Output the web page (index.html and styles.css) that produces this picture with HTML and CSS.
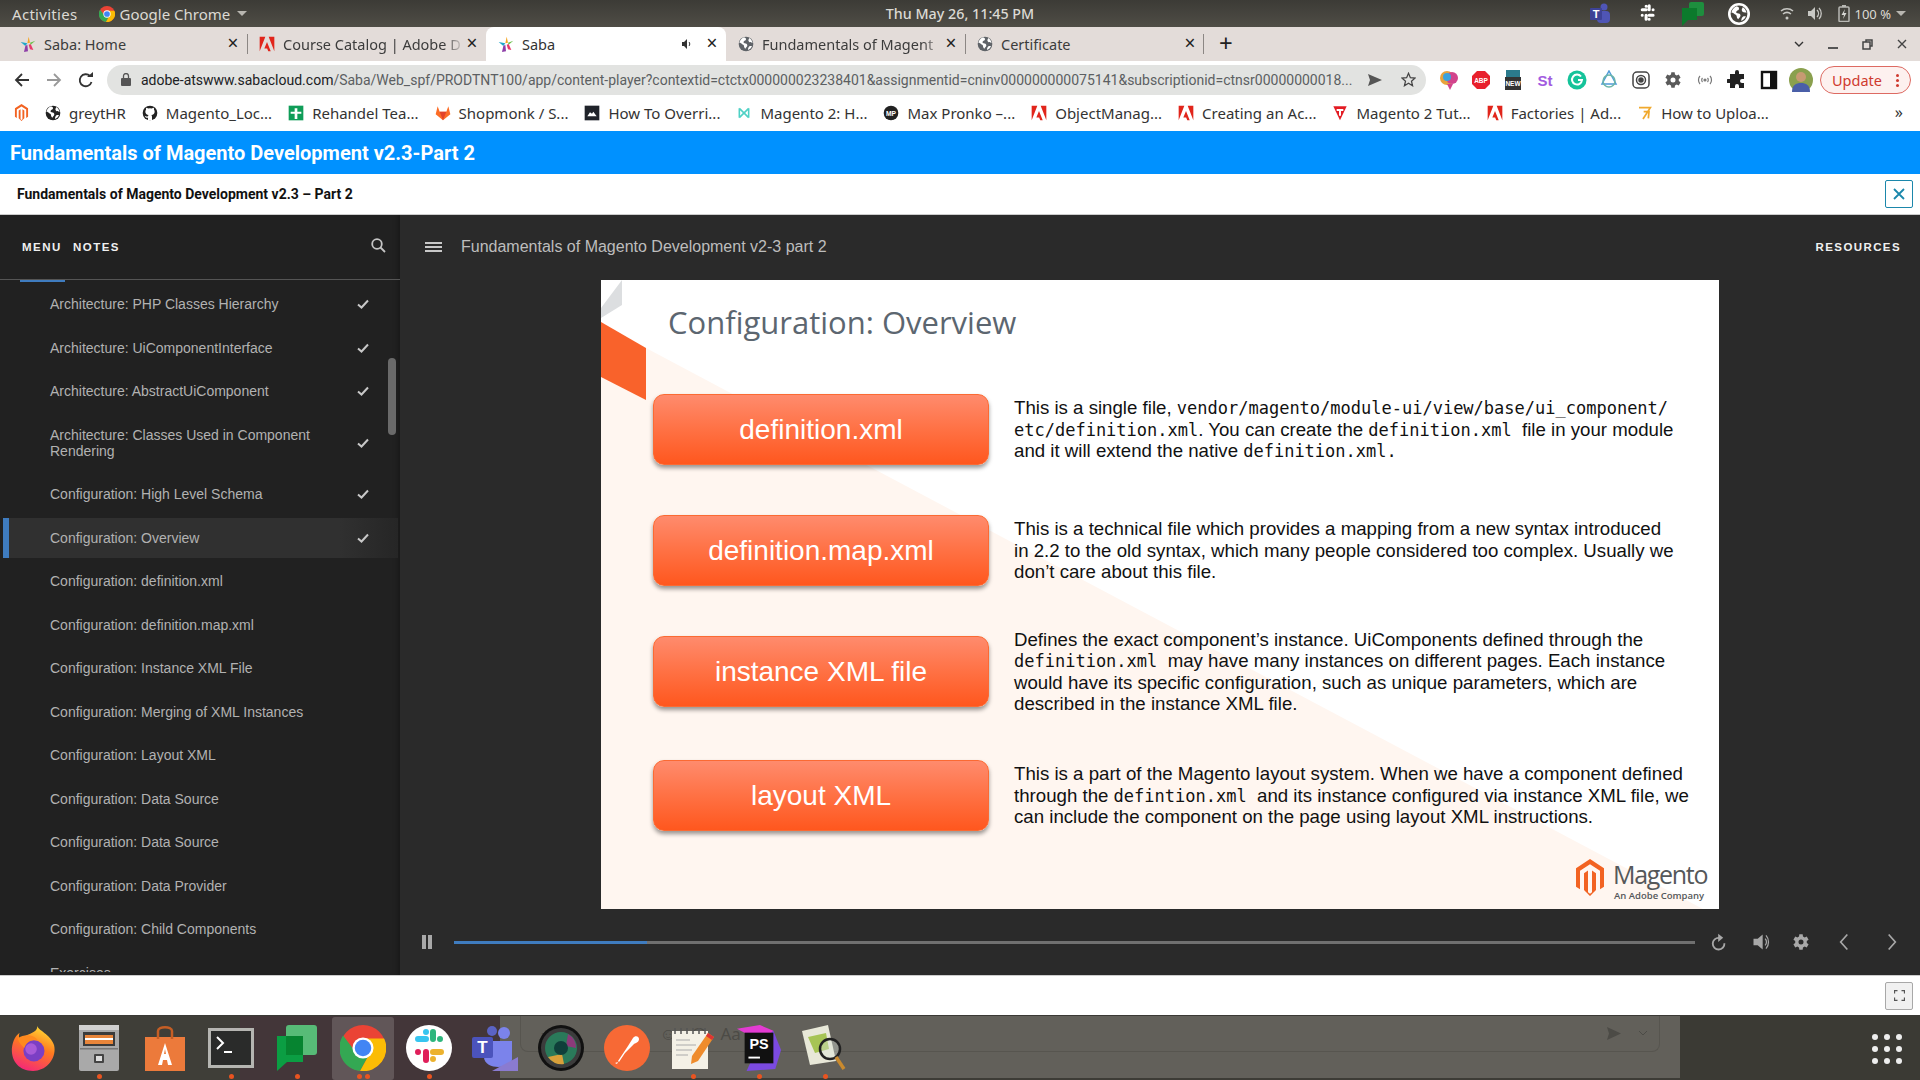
FILE: index.html
```html
<!DOCTYPE html>
<html lang="en">
<head>
    <meta charset="UTF-8">
    <meta name="viewport" content="width=device-width, initial-scale=1.0">
    <title>Saba</title>
    <link rel="stylesheet" href="styles.css">
</head>
<body>
    <svg class="defs" width="0" height="0">
        <symbol id="adobe" viewBox="0 0 24 24"><path fill="#e1251b" d="M14.5 1H23v22zM9.5 1H1v22zM12 9l5.6 14h-3.7l-1.7-4.4H8z"/></symbol>
        <symbol id="globe" viewBox="0 0 24 24"><circle cx="12" cy="12" r="11" fill="currentColor"/><path fill="#fff" d="M9 2c-3 1-6 4-7 8 2 0 3 1 4 2s3 1 3 3 1 3 2 4c1-2 3-3 3-5s-2-3-4-3-2-2-1-3 3-1 3-3-1-2-3-3zM17 3c-1 2-2 3-1 5s3 2 6 2c-1-3-3-6-5-7zM18 15c-2 1-3 3-3 6 3-1 5-3 6-6z"/></symbol>
        <symbol id="saba" viewBox="0 0 24 24"><path fill="#f5a623" d="M13 1l2 9-4 1z"/><path fill="#1fa7c9" d="M1 9l10 2-3 4z"/><path fill="#8e3fa8" d="M8 15l3-2 1 10-6 1z"/><path fill="#e8396b" d="M13 13l3-1 4 9-5-1z"/><path fill="#6cc04a" d="M15 10l8-3-7 6z"/></symbol>
        <symbol id="chrome" viewBox="0 0 24 24">
            <circle cx="12" cy="12" r="12" fill="#ea4335"/>
            <path fill="#34a853" d="M1.600 5.500A12 12 0 0 0 10.500 24L16 14H8z"/>
            <path fill="#fbbc05" d="M23 7H12l4 7-5.500 10A12 12 0 0 0 23 7z"/>
            <circle cx="12" cy="12" r="5.500" fill="#fff"/>
            <circle cx="12" cy="12" r="4.300" fill="#4285f4"/>
        </symbol>
        <symbol id="mage" viewBox="0 0 24 24"><path fill="#f26322" d="M12 0l10.500 6v12L19.500 19.700V7.700L12 3.400 4.500 7.700v12L1.500 18V6zM13.500 21.600V7.500l3 1.700v10.900L12 24l-4.500-3.900V9.200l3-1.700v14.100l1.500.900z"/></symbol>
        <symbol id="gear" viewBox="1 0 24 24"><path d="M19.900 13.200a7 7 0 0 0 0-2.400l2.200-1.500-2.200-3.800-2.500 1.100a7 7 0 0 0-2-1.200L15 2.800h-4l-.4 2.600a7 7 0 0 0-2 1.200L6.100 5.500 3.900 9.300l2.200 1.500a7 7 0 0 0 0 2.400l-2.200 1.500 2.200 3.800 2.500-1.100a7 7 0 0 0 2 1.200l.4 2.600h4l.4-2.600a7 7 0 0 0 2-1.200l2.500 1.100 2.200-3.800zM13 15a3 3 0 1 1 0-6 3 3 0 0 1 0 6z" fill-rule="evenodd"/></symbol>
    </svg>

    <!-- gnome top bar -->
    <div class="topBar">
        <div class="topLeft">
            <span class="activities">Activities</span>
            <span class="appName">
                <svg width="16" height="16" viewBox="0 0 24 24"><use href="#chrome"/></svg>
                Google Chrome <i class="caret"></i>
            </span>
        </div>
        <div class="clock">Thu May 26, 11:45 PM</div>
        <div class="topRight">
            <svg class="trTeams" width="22" height="24" viewBox="0 0 22 24"><circle cx="15" cy="5" r="3.5" fill="#4f55b5"/><rect x="8" y="9" width="13" height="12" rx="4" fill="#4f55b5"/><rect x="1" y="6" width="12" height="12" rx="1" fill="#3d4296"/><text x="7" y="15.5" class="svgT">T</text></svg>
            <svg class="trSlack" width="20" height="20" viewBox="0 0 46 46"><g stroke="#fff" stroke-width="7" stroke-linecap="round" fill="none"><path d="M21 13h-9M21 5v0M28 13V4M37 13v0M28 26h9M28 35v0M21 26v9M12 26v0"/></g></svg>
            <svg class="trChat" width="22" height="24" viewBox="0 0 22 24"><rect x="7" y="0" width="15" height="14" rx="2" fill="#1e8e3e"/><path fill="#0c7a2c" d="M0 6h15v12H6l-6 6z"/></svg>
            <svg class="trGlobe" width="22" height="22" viewBox="0 0 24 24" style="color:#46443e"><circle cx="12" cy="12" r="12" fill="#fff"/><use href="#globe" width="20" height="20" x="2" y="2"/></svg>
            <svg class="trWifi" width="14" height="15" viewBox="0 0 14 15" fill="none" stroke="#c8c8c4" stroke-width="1.600"><path d="M1 5c3.500-3 8.500-3 12 0M3 8c2.500-2 5.500-2 8 0"/><circle cx="7" cy="12" r="1.500" fill="#c8c8c4" stroke="none"/></svg>
            <svg class="trVol" width="15" height="15" viewBox="0 0 15 15" fill="#c8c8c4"><path d="M0 5h3l4-4v13l-4-4H0z"/><path fill="none" stroke="#c8c8c4" stroke-width="1.300" d="M9 4c2 2 2 5 0 7M11 2c3 3 3 8 0 11"/></svg>
            <svg class="trBatt" width="12" height="17" viewBox="0 0 12 17"><rect x="1" y="2" width="10" height="14.500" rx="1" fill="none" stroke="#b8b8b4" stroke-width="1.500"/><rect x="4" y="0" width="4" height="2" fill="#b8b8b4"/><path fill="#d8d8d4" d="M7 4L3.500 10H6l-1 4 3.500-6H6z"/></svg>
            <span class="trPct">100 %</span>
            <i class="caret"></i>
        </div>
    </div>

    <!-- chrome tabs -->
    <div class="tabStrip">
        <div class="tab">
            <svg class="fav" viewBox="0 0 24 24"><use href="#saba"/></svg>
            <span class="tabTitle">Saba: Home</span>
            <span class="tabX">×</span>
        </div>
        <div class="tab sep">
            <svg class="fav" viewBox="0 0 24 24"><use href="#adobe"/></svg>
            <span class="tabTitle fade">Course Catalog | Adobe D</span>
            <span class="tabX">×</span>
        </div>
        <div class="tab active">
            <svg class="fav" viewBox="0 0 24 24"><use href="#saba"/></svg>
            <span class="tabTitle">Saba</span>
            <svg class="tabSound" width="10" height="10" viewBox="0 0 10 10"><path fill="#333" d="M0 3h2l3-3v10L2 7H0z"/><path fill="none" stroke="#333" d="M7 3c1 1 1 3 0 4"/></svg>
            <span class="tabX">×</span>
        </div>
        <div class="tab">
            <svg class="fav grey" viewBox="0 0 24 24"><use href="#globe"/></svg>
            <span class="tabTitle fade">Fundamentals of Magent</span>
            <span class="tabX">×</span>
        </div>
        <div class="tab sep endSep">
            <svg class="fav grey" viewBox="0 0 24 24"><use href="#globe"/></svg>
            <span class="tabTitle">Certificate</span>
            <span class="tabX">×</span>
        </div>
        <div class="newTab">+</div>
        <div class="winBtns">
            <svg width="10" height="6" viewBox="0 0 10 6" fill="none" stroke="#333" stroke-width="1.400"><path d="M1 1l4 4 4-4"/></svg>
            <svg width="10" height="10" viewBox="0 0 10 10"><rect y="8" width="10" height="2" fill="#555"/></svg>
            <svg width="11" height="11" viewBox="0 0 11 11" fill="none" stroke="#444" stroke-width="1.500"><rect x="1" y="3" width="7" height="7"/><path d="M4 3V1h6v6H8"/></svg>
            <svg width="10" height="10" viewBox="0 0 10 10" stroke="#444" stroke-width="1.400"><path d="M1 1l8 8M9 1l-8 8"/></svg>
        </div>
    </div>

    <!-- address bar -->
    <div class="toolbar">
        <svg class="navBtn" width="16" height="16" viewBox="0 0 16 16" fill="none" stroke="#333" stroke-width="1.800"><path d="M15 8H2M8 2L2 8l6 6"/></svg>
        <svg class="navBtn" width="16" height="16" viewBox="0 0 16 16" fill="none" stroke="#999" stroke-width="1.800"><path d="M1 8h13M8 2l6 6-6 6"/></svg>
        <svg class="navBtn" width="16" height="16" viewBox="0 0 16 16" fill="none" stroke="#333" stroke-width="1.800"><path d="M13.500 10A6 6 0 1 1 12 4"/><path fill="#333" stroke="none" d="M9 5h6V0z"/></svg>
        <div class="omnibox">
            <svg class="lock" width="10" height="13" viewBox="0 0 10 13"><rect y="5" width="10" height="8" rx="1" fill="#555"/><path d="M2.500 5V3a2.500 2.500 0 0 1 5 0v2" fill="none" stroke="#555" stroke-width="1.300"/></svg>
            <span class="url"><b>adobe-atswww.sabacloud.com</b>/Saba/Web_spf/PRODTNT100/app/content-player?contextid=ctctx000000023238401&amp;assignmentid=cninv000000000075141&amp;subscriptionid=ctnsr00000000018...</span>
            <svg class="share" width="14" height="12" viewBox="0 0 14 12"><path fill="#555" d="M0 0l14 6-14 6 2-6z"/></svg>
            <svg class="star" width="15" height="15" viewBox="0 0 24 24" fill="none" stroke="#444" stroke-width="2"><path d="M12 2l3 7 7.500.700-5.700 5 1.700 7.300L12 18l-6.500 4 1.700-7.300-5.700-5L9 9z"/></svg>
        </div>
        <div class="extensions">
            <svg class="ext" viewBox="0 0 20 20"><circle cx="8" cy="8" r="7" fill="#e8a33c"/><circle cx="13" cy="8" r="6" fill="#d2448c"/><circle cx="8" cy="7" r="4" fill="#3aa2dd"/><path d="M8 14h6l-3 6z" fill="#d2448c"/></svg>
            <svg class="ext" viewBox="0 0 20 20"><path fill="#e8202c" d="M6 1h8l5 5v8l-5 5H6l-5-5V6z"/><text x="10" y="13" class="svgT small">ABP</text></svg>
            <svg class="ext" viewBox="0 0 20 20"><rect x="3" width="14" height="7" fill="#2b7a8c"/><rect x="2" y="7" width="16" height="13" fill="#333"/><text x="10" y="16" class="svgT small">NEW</text></svg>
            <svg class="ext" viewBox="0 0 20 20"><text x="10" y="16" class="svgT st">St</text></svg>
            <svg class="ext" viewBox="0 0 20 20"><circle cx="10" cy="10" r="9.500" fill="#15c39a"/><path d="M14 6.500A5 5 0 1 0 15 10h-4" fill="none" stroke="#fff" stroke-width="2"/></svg>
            <svg class="ext" viewBox="0 0 20 20" fill="none" stroke="#4f9bd9" stroke-width="1.500"><path d="M10 1l7 13H3z"/><circle cx="10" cy="11" r="6" stroke="#6cb6a8"/></svg>
            <svg class="ext" viewBox="0 0 20 20" fill="none" stroke="#444" stroke-width="1.500"><rect x="2" y="2" width="16" height="16" rx="4"/><circle cx="10" cy="10" r="4.500"/><circle cx="10" cy="10" r="2" fill="#444"/></svg>
            <svg class="ext" viewBox="0 0 24 24"><use href="#gear" fill="#5a5a5a"/></svg>
            <svg class="ext" viewBox="0 0 20 20" fill="none" stroke="#777" stroke-width="1.200"><path d="M5 6c-2 2-2 6 0 8M15 6c2 2 2 6 0 8M7.500 8c-1 1-1 3 0 4M12.500 8c1 1 1 3 0 4"/><circle cx="10" cy="10" r="1" fill="#777"/></svg>
            <svg class="ext" viewBox="0 0 20 20"><path fill="#222" d="M8 2a2 2 0 0 1 4 0v2h5v5h-2a2 2 0 0 0 0 4h2v5h-5v-2a2 2 0 0 0-4 0v2H3v-5H1a2 2 0 0 1 0-4h2V4h5z"/></svg>
            <svg class="ext" viewBox="0 0 20 20"><rect x="3" y="2" width="14" height="16" fill="none" stroke="#111" stroke-width="2.400"/><rect x="11" y="2" width="6" height="16" fill="#111"/></svg>
            <svg class="avatar" viewBox="0 0 24 24"><circle cx="12" cy="12" r="12" fill="#8aa04e"/><circle cx="12" cy="9" r="5" fill="#c79a72"/><path d="M3 24c0-7 4-9 9-9s9 2 9 9z" fill="#4a5fa8"/></svg>
        </div>
        <div class="updateBtn"><span>Update</span><i class="updDots"></i></div>
    </div>

    <!-- bookmarks -->
    <div class="bookmarks">
        <svg class="bmFirst" viewBox="0 0 24 24" preserveAspectRatio="none"><use href="#mage"/></svg>
        <div class="bm"><svg class="fav dark" viewBox="0 0 24 24"><use href="#globe"/></svg>greytHR</div>
        <div class="bm"><svg class="fav" viewBox="0 0 24 24"><circle cx="12" cy="12" r="11" fill="#222"/><path fill="#fff" d="M9 23v-4c-3 .500-4-1-5-3 2 0 2 2 5 1 0-1 .300-1.500 1-2-3-.500-5-2-5-5 0-1.500.500-2.500 1-3-.200-1 0-2 .300-3 1 0 2 .500 3 1.300a9 9 0 0 1 5.400 0C15.700 4.500 16.700 4 17.700 4c.300 1 .500 2 .300 3 .500.500 1 1.500 1 3 0 3-2 4.500-5 5 .700.500 1 1.300 1 2.500V23z"/></svg>Magento_Loc...</div>
        <div class="bm"><svg class="fav" viewBox="0 0 24 24"><rect x="1" y="1" width="22" height="22" fill="#0f9d58"/><path fill="#fff" d="M10 5h4v5h6v3h-6v8h-4v-8H4v-3h6z"/></svg>Rehandel Tea...</div>
        <div class="bm"><svg class="fav" viewBox="0 0 24 24"><path fill="#fc6d26" d="M12 23L1 14 4 2l3 8h10l3-8 3 12z"/><path fill="#e24329" d="M12 23L7 10h10z"/></svg>Shopmonk / S...</div>
        <div class="bm"><svg class="fav" viewBox="0 0 24 24"><rect x="1" y="1" width="22" height="22" fill="#20232a"/><path fill="#fff" d="M5 17l4-6 3 2 2-3 5 7z"/></svg>How To Overri...</div>
        <div class="bm"><svg class="fav" viewBox="0 0 24 24" fill="none" stroke="#4fd1c5" stroke-width="2.400"><path d="M5 5v14M19 5v14M5 5l14 14M19 5L5 19"/></svg>Magento 2: H...</div>
        <div class="bm"><svg class="fav" viewBox="0 0 24 24"><circle cx="12" cy="12" r="11" fill="#222"/><text x="12" y="16" class="svgT mp">MP</text></svg>Max Pronko –...</div>
        <div class="bm"><svg class="fav" viewBox="0 0 24 24"><use href="#adobe"/></svg>ObjectManag...</div>
        <div class="bm"><svg class="fav" viewBox="0 0 24 24"><use href="#adobe"/></svg>Creating an Ac...</div>
        <div class="bm"><svg class="fav" viewBox="0 0 24 24"><path fill="#e31b23" d="M2 2h20l-10 21z"/><path fill="#fff" d="M7 6h10v3h-3.500v7h-3V9H7z"/></svg>Magento 2 Tut...</div>
        <div class="bm"><svg class="fav" viewBox="0 0 24 24"><use href="#adobe"/></svg>Factories | Ad...</div>
        <div class="bm"><svg class="fav" viewBox="0 0 24 24" fill="none" stroke="#f0a92e" stroke-width="2.600"><path d="M3 4h17L9 21M10 10h8l-1 10"/></svg>How to Uploa...</div>
        <div class="bmMore">»</div>
    </div>

    <!-- saba player -->
    <div class="courseBar">Fundamentals of Magento Development v2.3-Part 2</div>
    <div class="courseHead">
        <span>Fundamentals of Magento Development v2.3 – Part 2</span>
        <div class="closeBtn">
            <svg width="12" height="12" viewBox="0 0 12 12" stroke="#1b87ab" stroke-width="1.800"><path d="M1 1l10 10M11 1L1 11"/></svg>
        </div>
    </div>

    <div class="player">
        <div class="sidebar">
            <div class="sideHead">
                <span class="sideTab on">MENU</span>
                <span class="sideTab">NOTES</span>
                <svg class="sideSearch" width="15" height="15" viewBox="0 0 15 15" fill="none" stroke="#c4c4c4" stroke-width="1.800"><circle cx="6" cy="6" r="4.800"/><path d="M9.500 9.500l4.500 4.500"/></svg>
            </div>
            <div class="sideList">
                <div class="item"><span>Architecture: PHP Classes Hierarchy</span><svg class="tick" viewBox="0 0 12 10"><path d="M1 5.500l3.500 3L11 1.500"/></svg></div>
                <div class="item"><span>Architecture: UiComponentInterface</span><svg class="tick" viewBox="0 0 12 10"><path d="M1 5.500l3.500 3L11 1.500"/></svg></div>
                <div class="item"><span>Architecture: AbstractUiComponent</span><svg class="tick" viewBox="0 0 12 10"><path d="M1 5.500l3.500 3L11 1.500"/></svg></div>
                <div class="item tall"><span>Architecture: Classes Used in Component Rendering</span><svg class="tick" viewBox="0 0 12 10"><path d="M1 5.500l3.500 3L11 1.500"/></svg></div>
                <div class="item"><span>Configuration: High Level Schema</span><svg class="tick" viewBox="0 0 12 10"><path d="M1 5.500l3.500 3L11 1.500"/></svg></div>
                <div class="item current"><span>Configuration: Overview</span><svg class="tick" viewBox="0 0 12 10"><path d="M1 5.500l3.500 3L11 1.500"/></svg></div>
                <div class="item"><span>Configuration: definition.xml</span></div>
                <div class="item"><span>Configuration: definition.map.xml</span></div>
                <div class="item"><span>Configuration: Instance XML File</span></div>
                <div class="item"><span>Configuration: Merging of XML Instances</span></div>
                <div class="item"><span>Configuration: Layout XML</span></div>
                <div class="item"><span>Configuration: Data Source</span></div>
                <div class="item"><span>Configuration: Data Source</span></div>
                <div class="item"><span>Configuration: Data Provider</span></div>
                <div class="item"><span>Configuration: Child Components</span></div>
                <div class="item"><span>Exercises</span></div>
            </div>
            <div class="scrollThumb"></div>
        </div>

        <div class="stage">
            <div class="stageHead">
                <svg width="17" height="10" viewBox="0 0 17 10" fill="#c8c8c8"><rect width="17" height="2"/><rect y="4" width="17" height="2"/><rect y="8" width="17" height="2"/></svg>
                <span class="stageTitle">Fundamentals of Magento Development v2-3 part 2</span>
                <span class="resources">RESOURCES</span>
            </div>

            <div class="slide">
                <svg class="slideBg" viewBox="0 0 1118 629">
                    <path fill="#fff6f0" d="M0 85L45 68l1057 561H0z"/>
                    <path fill="#dcdee0" d="M0 28L21 0v25L0 38z"/>
                    <path fill="#f9622b" d="M0 42l45 26v52L0 97z"/>
                </svg>
                <h1 class="slideTitle">Configuration: Overview</h1>
                <div class="slideRow">
                    <div class="pill">definition.xml</div>
                    <p>This is a single file, <code>vendor/magento/module-ui/view/base/ui_component/</code><br><code>etc/definition.xml</code>. You can create the <code>definition.xml</code>&nbsp; file in your module<br>and it will extend the native <code>definition.xml.</code></p>
                </div>
                <div class="slideRow">
                    <div class="pill">definition.map.xml</div>
                    <p>This is a technical file which provides a mapping from a new syntax introduced<br>in 2.2 to the old syntax, which many people considered too complex. Usually we<br>don’t care about this file.</p>
                </div>
                <div class="slideRow">
                    <div class="pill">instance XML file</div>
                    <p>Defines the exact component’s instance. UiComponents defined through the<br><code>definition.xml</code>&nbsp; may have many instances on different pages. Each instance<br>would have its specific configuration, such as unique parameters, which are<br>described in the instance XML file.</p>
                </div>
                <div class="slideRow lastRow">
                    <div class="pill">layout XML</div>
                    <p>This is a part of the Magento layout system. When we have a component defined<br>through the <code>defintion.xml</code>&nbsp; and its instance configured via instance XML file, we<br>can include the component on the page using layout XML instructions.</p>
                </div>
                <div class="mageLogo">
                    <svg width="32" height="37" viewBox="0 0 24 24" preserveAspectRatio="none"><use href="#mage"/></svg>
                    <div class="mageText">
                        <span class="mageName">Magento</span>
                        <span class="mageSub">An Adobe Company</span>
                    </div>
                </div>
            </div>

            <div class="controls">
                <svg width="10" height="14" viewBox="0 0 10 14" fill="#a8a8a8"><rect width="4" height="14"/><rect x="6" width="4" height="14"/></svg>
                <div class="track"><div class="trackDone" style="width:193px"></div></div>
                <svg class="ctl replay" viewBox="0 0 24 24" fill="none" stroke="#a8a8a8" stroke-width="2.200"><path d="M18.500 13.500A7 7 0 1 1 12 7"/><path fill="#a8a8a8" stroke="none" d="M11 2l6 5-6 5z"/></svg>
                <svg class="ctl" viewBox="0 0 24 24" fill="#a8a8a8"><path d="M3 8h5l6-5v18l-6-5H3z"/><path fill="none" stroke="#a8a8a8" stroke-width="1.500" d="M17 8c2 2.500 2 5.500 0 8M18 4c4 4.500 4 11.500 0 16"/></svg>
                <svg class="ctl gearCtl" viewBox="0 0 24 24" fill="#a8a8a8"><use href="#gear"/></svg>
                <svg class="ctl arrowCtl" viewBox="0 0 24 24" fill="none" stroke="#a8a8a8" stroke-width="2"><path d="M16 3l-8 9 8 9"/></svg>
                <svg class="ctl arrowCtl nextCtl" viewBox="0 0 24 24" fill="none" stroke="#a8a8a8" stroke-width="2"><path d="M8 3l8 9-8 9"/></svg>
            </div>
        </div>
    </div>

    <div class="pageFoot">
        <div class="fullBtn">
            <svg width="11" height="11" viewBox="0 0 11 11" fill="none" stroke="#555" stroke-width="1.300"><path d="M0.500 3.500v-3h3M7.500.500h3v3M10.500 7.500v3h-3M3.500 10.500h-3v-3"/></svg>
        </div>
    </div>

    <!-- ubuntu dock, the teams window shows through behind it -->
    <div class="dock">
        <div class="dockBack">
            <div class="zoneA"></div>
            <div class="zoneB"></div>
            <div class="zoneC">
                <div class="ghostBox">
                    <span>+</span><span class="gapA">☺</span><span>@</span><span>Aa</span>
                    <svg class="ghostSend" width="14" height="13" viewBox="0 0 14 13"><path fill="#4c4b46" d="M0 0l14 6.500L0 13l2-6.500z"/></svg>
                    <svg class="ghostDown" width="8" height="5" viewBox="0 0 8 5" fill="none" stroke="#4c4b46"><path d="M0 0l4 4 4-4"/></svg>
                </div>
            </div>
            <div class="zoneD"></div>
        </div>
        <div class="dockApp"><svg viewBox="0 0 46 48"><defs><linearGradient id="ffBody" x1="0.700" y1="0" x2="0.300" y2="1"><stop offset="0" stop-color="#ffe135"/><stop offset=".45" stop-color="#ff7a1f"/><stop offset="1" stop-color="#f5267a"/></linearGradient></defs><path fill="url(#ffBody)" d="M27 0c1 6 14 9 18 21 3 13-7 27-22 27S0 37 1 24C2 16 5 11 9 8c-1 3-1 6 1 8 3-5 9-6 14-9 3-2 4-4 3-7z"/><circle cx="24" cy="27" r="11" fill="#7b3fc4"/><circle cx="21" cy="25" r="6" fill="#a85ad8"/><path fill="#ff8a1f" d="M7 14c7-5 17-4 21 2-5-2-12 1-14 8-3-3-6-6-7-10z"/></svg></div>
        <div class="dockApp run"><svg viewBox="0 0 44 46"><rect x="2" y="0" width="40" height="46" rx="2" fill="#a9a9a9"/><rect x="2" y="0" width="40" height="5" fill="#d0d0d0"/><rect x="6" y="7" width="32" height="14" fill="#3b3b3b"/><rect x="8" y="10" width="28" height="9" fill="#e8853a"/><rect x="8" y="13" width="28" height="2" fill="#fff"/><rect x="3" y="23" width="38" height="1.500" fill="#777"/><rect x="17" y="29" width="10" height="9" rx="1" fill="#444"/><rect x="19" y="31" width="6" height="5" fill="#ddd"/></svg></div>
        <div class="dockApp"><svg viewBox="0 0 44 46"><path fill="#ec7a3b" d="M2 12h40v34H2z"/><path fill="none" stroke="#c55e25" stroke-width="2.500" d="M15 14V6c0-5 14-5 14 0v8"/><path fill="#fff" d="M22 18l7 22h-4l-1-5h-4l-1 5h-4zM21 29h2l-1-5z"/></svg></div>
        <div class="dockApp run"><svg viewBox="0 0 46 46"><rect y="3" width="46" height="40" fill="#b5b5b1"/><rect x="3" y="6" width="40" height="34" fill="#2a2b2a"/><path fill="none" stroke="#fff" stroke-width="2" d="M9 12l6 6-6 6"/><rect x="16" y="26" width="8" height="2" fill="#fff"/></svg></div>
        <div class="dockApp run"><svg viewBox="0 0 40 46"><rect x="9" y="0" width="31" height="30" rx="3" fill="#57bb77"/><path fill="#0b9e43" d="M0 11h26v26H10l-10 9z"/><rect x="9" y="11" width="17" height="19" fill="#068430"/></svg></div>
        <div class="dockApp current run two"><svg viewBox="0 0 24 24" preserveAspectRatio="none"><use href="#chrome"/></svg></div>
        <div class="dockApp run"><svg viewBox="0 0 46 46"><circle cx="23" cy="23" r="23" fill="#fff"/><g stroke-width="6" stroke-linecap="round" fill="none"><path stroke="#36c5f0" d="M20 14h-8M20 7v0"/><path stroke="#2eb67d" d="M27 14V7M34 14v0"/><path stroke="#ecb22e" d="M27 27h8M27 34v0"/><path stroke="#e01e5a" d="M20 27v8M12 27v0"/></g></svg></div>
        <div class="dockApp"><svg viewBox="0 0 46 46"><circle cx="32" cy="8" r="6" fill="#7b83eb"/><circle cx="20" cy="6" r="5" fill="#5b63c4"/><path fill="#7b83eb" d="M12 16h28v18c0 6-8 8-14 8s-14-3-14-10z"/><rect x="0" y="12" width="21" height="21" rx="2" fill="#4b53bc"/><text x="10.500" y="28" class="svgT teamsT">T</text><path fill="#8a7bd0" d="M46 32v14H20z"/></svg></div>
        <div class="dockApp"><svg viewBox="0 0 46 46"><circle cx="23" cy="23" r="23" fill="#111"/><circle cx="23" cy="23" r="20" fill="#3c3c3c"/><circle cx="23" cy="23" r="16" fill="#2a7a5a"/><path fill="#d9a03a" d="M10 32a16 16 0 0 0 16 7l-2-10z"/><path fill="#8c3a7a" d="M30 9a16 16 0 0 1 8 14l-10-2z"/><circle cx="23" cy="23" r="7" fill="#0f3f3a"/></svg></div>
        <div class="dockApp"><svg viewBox="0 0 46 46"><circle cx="23" cy="23" r="23" fill="#f76935"/><path fill="#fff" d="M14 36l10-15 5-8c2-3 6-2 6 1 0 3-3 4-5 5l-9 9-6 9zM11 38l3-1-1 2z"/></svg></div>
        <div class="dockApp run"><svg viewBox="0 0 46 46"><rect x="2" y="6" width="36" height="38" fill="#f4f1e6"/><path stroke="#555" stroke-width="1.500" d="M5 3v6M11 3v6M17 3v6M23 3v6M29 3v6M35 3v6"/><path stroke="#aaa" d="M6 15h14M6 20h20M6 25h16M6 30h12"/><path fill="#ef8c2c" d="M38 8l6 4-16 24-7 3 1-8z"/><path fill="#d33" d="M38 8l6 4-2 3-6-4z"/></svg></div>
        <div class="dockApp run"><svg viewBox="0 0 46 48"><path fill="#e33bd2" d="M0 4l24-4 14 6-8 14z"/><path fill="#7b4ae0" d="M38 6l8 20-6 20-30 2 14-30z"/><rect x="8" y="8" width="30" height="32" fill="#111"/><text x="23" y="25" class="svgT psT">PS</text><rect x="12" y="33" width="12" height="2" fill="#fff"/></svg></div>
        <div class="dockApp run"><svg viewBox="0 0 46 46"><path fill="#e8e8d8" d="M0 6l26-6 8 36-26 4z"/><path fill="#a6c454" d="M6 12l18-4 3 16-14 4z"/><circle cx="28" cy="24" r="10" fill="rgba(220,230,220,.4)" stroke="#222" stroke-width="2.500"/><path stroke="#c98a2e" stroke-width="3.500" d="M34 32l8 12"/></svg></div>
        <div class="appGrid"><i></i><i></i><i></i><i></i><i></i><i></i><i></i><i></i><i></i></div>
    </div>
</body>
</html>
```

FILE: styles.css
```css
* {
    box-sizing: border-box;
}
html, body {
    margin: 0;
    height: 100%;
}
body {
    width: 1920px;
    height: 1080px;
    overflow: hidden;
    display: flex;
    flex-direction: column;
    font-family: "Noto Sans", sans-serif;
    background: #fff;
}
.defs {
    position: absolute;
}
.svgT {
    font-family: "Liberation Sans", sans-serif;
    font-weight: 700;
    font-size: 11px;
    fill: #fff;
    text-anchor: middle;
}
.svgT.small {
    font-size: 6.5px;
}
.svgT.st {
    font-size: 15px;
    fill: #a25be0;
}
.svgT.mp {
    font-size: 10px;
}
.svgT.teamsT {
    font-size: 17px;
}
.svgT.psT {
    font-size: 15px;
}

/* top bar */
.topBar {
    height: 27px;
    flex: none;
    display: grid;
    grid-template-columns: 1fr auto 1fr;
    align-items: center;
    font-size: 15px;
    color: #dcdad4;
    background: linear-gradient(#3c3b36, #4f4d46);
}
.topLeft {
    display: flex;
    align-items: center;
    gap: 21px;
    padding-left: 12px;
}
.activities {
    letter-spacing: .3px;
}
.appName {
    display: flex;
    align-items: center;
    gap: 5px;
}
.caret {
    display: inline-block;
    width: 0;
    height: 0;
    border-left: 5px solid transparent;
    border-right: 5px solid transparent;
    border-top: 5px solid #b8b6b0;
    margin-left: 2px;
}
.clock {
    font-size: 14.300px;
    font-weight: 500;
}
.topRight {
    height: 27px;
    display: flex;
    align-items: center;
    justify-content: flex-end;
    padding-right: 14px;
    font-size: 13px;
}
.trTeams { margin-right: 26px; }
.trSlack { margin-right: 25px; }
.trChat { margin-right: 24px; }
.trGlobe { margin-right: 30px; }
.trWifi { margin-right: 14px; }
.trVol { margin-right: 15px; }
.trBatt { margin-right: 5px; }
.trPct { margin-right: 3px; }

/* tabs */
.tabStrip {
    height: 34px;
    flex: none;
    display: flex;
    padding-left: 8px;
    background: #e3dcd9;
    color: #3c3c3c;
    font-size: 14.500px;
}
.tab {
    position: relative;
    width: 239px;
    height: 34px;
    display: flex;
    align-items: center;
    padding: 0 8px 1px 12px;
}
.tab.sep::before, .tab.endSep::after {
    content: "";
    position: absolute;
    left: 0;
    top: 7px;
    height: 20px;
    width: 1px;
    background: #8c8784;
}
.tab.endSep::after {
    left: auto;
    right: 0;
}
.tab.active {
    background: #fff;
    border-radius: 8px 8px 0 0;
    color: #333;
    width: 240px;
}
.fav {
    width: 16px;
    height: 16px;
    flex: none;
}
.fav.grey {
    color: #5f6368;
}
.fav.dark {
    color: #222;
}
.tabTitle {
    flex: 1;
    margin-left: 8px;
    white-space: nowrap;
}
.tabTitle.fade {
    -webkit-mask-image: linear-gradient(to right, #000 88%, transparent 99%);
    mask-image: linear-gradient(to right, #000 88%, transparent 99%);
}
.tabSound {
    margin-right: 14px;
}
.tabX {
    font-size: 19px;
    line-height: 1;
    color: #222;
    width: 12px;
    text-align: center;
}
.newTab {
    font-size: 24px;
    line-height: 32px;
    color: #222;
    margin-left: 15px;
}
.winBtns {
    margin-left: auto;
    display: flex;
    align-items: center;
    gap: 24px;
    padding-right: 13px;
}

/* toolbar */
.toolbar {
    height: 37px;
    flex: none;
    display: flex;
    align-items: center;
    padding-left: 14px;
    background: #fff;
}
.navBtn {
    margin-right: 16px;
}
.omnibox {
    width: 1319px;
    height: 30px;
    margin-left: -3px;
    display: flex;
    align-items: center;
    padding-left: 14px;
    background: #e2e3e1;
    border-radius: 15px;
}
.url {
    margin-left: 10px;
    width: 1214px;
    flex: none;
    font: 14px Roboto, sans-serif;
    white-space: nowrap;
    color: #5c5f62;
}
.url b {
    font-weight: 400;
    color: #202124;
}
.share {
    margin-left: 13px;
}
.star {
    margin-left: 19px;
}
.extensions {
    display: flex;
    align-items: center;
    gap: 12px;
    margin-left: 13px;
}
.ext {
    width: 20px;
    height: 20px;
    flex: none;
}
.avatar {
    width: 24px;
    height: 24px;
    margin-left: -2px;
}
.updateBtn {
    width: 91px;
    height: 28px;
    margin-left: 7px;
    display: flex;
    align-items: center;
    padding-left: 11px;
    border: 1px solid #dd6a62;
    border-radius: 14px;
    background: #fdf1ef;
    color: #cf3a2e;
    font-size: 14.500px;
    position: relative;
}
.updDots {
    position: absolute;
    right: 11px;
    top: 7px;
    width: 3px;
    height: 3px;
    border-radius: 50%;
    background: #cf3a2e;
    box-shadow: 0 5px 0 #cf3a2e, 0 10px 0 #cf3a2e;
}

/* bookmarks */
.bookmarks {
    position: relative;
    height: 33px;
    flex: none;
    display: flex;
    align-items: center;
    padding: 0 0 4px 14px;
    gap: 16px;
    font-size: 15px;
    color: #333;
    background: #fff;
    white-space: nowrap;
}
.bmFirst {
    width: 15px;
    height: 17px;
    flex: none;
}
.bm {
    display: flex;
    align-items: center;
    gap: 8px;
}
.bmMore {
    position: absolute;
    right: 17px;
    top: 3px;
    font-size: 16px;
}

/* course header */
.courseBar {
    height: 43px;
    flex: none;
    display: flex;
    align-items: center;
    padding-left: 10px;
    background: #0091ff;
    color: #fff;
    font: 700 20px Roboto, sans-serif;
}
.courseHead {
    height: 41px;
    flex: none;
    display: flex;
    align-items: center;
    justify-content: space-between;
    padding: 0 7px 0 17px;
    background: #fff;
    border-bottom: 1px solid #ccc;
    font: 700 14px Roboto, sans-serif;
    color: #111;
}
.closeBtn {
    width: 28px;
    height: 28px;
    display: flex;
    align-items: center;
    justify-content: center;
    border: 1px solid #1b87ab;
    border-radius: 2px;
}

/* player */
.player {
    height: 760px;
    flex: none;
    display: flex;
    background: #2a2a2a;
}
.sidebar {
    position: relative;
    width: 400px;
    background: #212121;
    box-shadow: inset -6px 0 6px -5px rgba(0, 0, 0, .35);
}
.sideHead {
    position: relative;
    height: 65px;
    display: flex;
    align-items: center;
    gap: 11px;
    padding-left: 22px;
    border-bottom: 1px solid #555;
}
.sideTab {
    position: relative;
    font: 700 11.500px "Liberation Sans", sans-serif;
    letter-spacing: 1.500px;
    color: #f0f0f0;
}
.sideTab.on::after {
    content: "";
    position: absolute;
    left: -2px;
    right: -3px;
    top: 39px;
    height: 2px;
    background: #3f7cbf;
}
.sideSearch {
    position: absolute;
    left: 371px;
    top: 23px;
}
.sideList {
    height: 692px;
    padding-top: 4px;
    overflow: hidden;
}
.item {
    height: 40px;
    margin: 0 2px 3.500px 0;
    display: flex;
    align-items: center;
    padding: 0 28px 0 50px;
    font: 14px/16px "Liberation Sans", sans-serif;
    color: #b2b2b2;
}
.item span {
    flex: 1;
}
.item.tall {
    height: 56px;
}
.item.current {
    margin-left: 3px;
    padding-left: 41px;
    border-left: 6px solid #3f7cbf;
    background: linear-gradient(to right, #303030 85%, #262626);
}
.tick {
    width: 12px;
    height: 10px;
    flex: none;
    margin-right: 1px;
    fill: none;
    stroke: #c8c8c8;
    stroke-width: 2;
}
.scrollThumb {
    position: absolute;
    left: 388px;
    top: 143px;
    width: 8px;
    height: 77px;
    border-radius: 4px;
    background: #6a6a6a;
}
.stage {
    flex: 1;
    display: flex;
    flex-direction: column;
}
.stageHead {
    height: 65px;
    flex: none;
    display: flex;
    align-items: center;
    padding: 0 19px 2px 25px;
}
.stageTitle {
    margin-left: 19px;
    font: 16px "Liberation Sans", sans-serif;
    color: #bdbdbd;
}
.resources {
    margin-left: auto;
    font: 700 11.500px "Liberation Sans", sans-serif;
    letter-spacing: 1.400px;
    color: #f0f0f0;
}

/* slide */
.slide {
    position: relative;
    width: 1118px;
    height: 629px;
    flex: none;
    margin-left: 201px;
    padding-top: 22px;
    background: #fff;
}
.slideBg {
    position: absolute;
    left: 0;
    top: 0;
    width: 100%;
    height: 100%;
}
.slideTitle {
    position: relative;
    margin: 0 0 52px 67px;
    font: 400 31px/40px "Open Sans", sans-serif;
    color: #5c6670;
}
.slideRow {
    position: relative;
    height: 71px;
    margin: 0 0 50px 52px;
    display: flex;
    align-items: center;
    gap: 25px;
}
.slideRow.lastRow {
    margin-top: 53px;
}
.pill {
    width: 336px;
    height: 71px;
    flex: none;
    display: flex;
    align-items: center;
    justify-content: center;
    padding-top: 1px;
    border: 1px solid #fb6a33;
    border-radius: 11px;
    background: linear-gradient(#ff8b6d, #ff7144 50%, #ff571e);
    box-shadow: 0 3px 4px rgba(0, 0, 0, .4);
    color: #fff;
    font: 28px "Liberation Sans", sans-serif;
}
.slideRow p {
    margin: 0;
    white-space: nowrap;
    font: 18.670px/21.500px "Liberation Sans", sans-serif;
    color: #111;
}
.slideRow code {
    font: 17px/1 "DejaVu Sans Mono", monospace;
}
.mageLogo {
    position: absolute;
    left: 973px;
    top: 579px;
    display: flex;
    gap: 7px;
}
.mageText {
    display: flex;
    flex-direction: column;
    color: #55585a;
}
.mageName {
    font: 400 25px/30px "Open Sans", sans-serif;
    letter-spacing: -1.300px;
}
.mageSub {
    margin: 1px 0 0 1px;
    font: 600 9.500px/12px "Open Sans", sans-serif;
    white-space: nowrap;
}

/* controls */
.controls {
    flex: 1;
    display: flex;
    align-items: center;
    padding-left: 22px;
}
.track {
    width: 1241px;
    height: 3px;
    margin-left: 22px;
    background: #707070;
}
.trackDone {
    height: 100%;
    background: #3f7cbf;
}
.ctl {
    width: 20px;
    height: 20px;
    flex: none;
    margin-left: 22px;
}
.ctl.replay {
    margin-left: 14px;
}
.gearCtl {
    margin-left: 20px;
}
.arrowCtl {
    margin-left: 23px;
}
.nextCtl {
    margin-left: 28px;
}

.pageFoot {
    height: 40px;
    flex: none;
    display: flex;
    justify-content: flex-end;
    align-items: center;
    padding-right: 7px;
    border-top: 1px solid #ccc;
    background: #fff;
}
.fullBtn {
    width: 28px;
    height: 28px;
    display: flex;
    align-items: center;
    justify-content: center;
    background: #f1f1f1;
    border: 1px solid #a8a8a8;
    border-radius: 2px;
}

/* dock */
.dock {
    position: relative;
    flex: 1;
    display: flex;
    border-top: 1px solid #3a3935;
}
.dockBack {
    position: absolute;
    left: 0;
    top: 0;
    right: 0;
    bottom: 0;
    display: flex;
    background: #3d3c36;
}
.zoneA { width: 240px; background: #3f3e38; }
.zoneB { width: 260px; background: #433639; }
.zoneC {
    width: 1180px;
    height: 62px;
    padding: 0 20px;
    background: #62605a;
}
.zoneD { flex: 1; background: #3b3a34; }
.ghostBox {
    position: relative;
    height: 36px;
    display: flex;
    align-items: center;
    gap: 14px;
    padding-left: 20px;
    border: 1px solid #57554f;
    border-top: none;
    border-radius: 0 0 8px 8px;
    font-size: 17px;
    color: #4c4b46;
}
.gapA {
    margin-left: 95px;
}
.ghostSend {
    position: absolute;
    left: 1086px;
    top: 11px;
}
.ghostDown {
    position: absolute;
    left: 1118px;
    top: 15px;
}
.dockApp {
    position: relative;
    width: 66px;
    height: 64px;
    flex: none;
    display: flex;
    align-items: center;
    justify-content: center;
    padding-bottom: 1px;
}
.dockApp svg {
    width: 46px;
    height: 46px;
}
.dockApp.current::before {
    content: "";
    position: absolute;
    left: 2px;
    right: 2px;
    top: 1px;
    bottom: 0;
    border-radius: 3px;
    background: rgba(255, 255, 255, .16);
}
.dockApp.current svg {
    position: relative;
}
.dockApp.run::after {
    content: "";
    position: absolute;
    left: 31px;
    bottom: 1px;
    width: 5px;
    height: 5px;
    border-radius: 50%;
    background: #e95420;
}
.dockApp.two::after {
    left: 27px;
    box-shadow: 8px 0 0 #e95420;
}
.appGrid {
    position: absolute;
    left: 1872px;
    top: 18px;
    display: grid;
    grid-template-columns: repeat(3, 6px);
    gap: 6px;
}
.appGrid i {
    height: 6px;
    border-radius: 50%;
    background: #eee;
}
```
